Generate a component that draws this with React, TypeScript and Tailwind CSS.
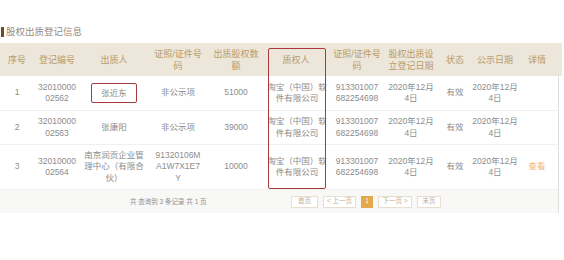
import React from 'react';

type Cell = string | string[];

interface Row {
  no: string;
  regNo: Cell;
  pledgor: Cell;
  pledgorId: Cell;
  amount: string;
  pledgee: Cell;
  pledgeeId: Cell;
  regDate: Cell;
  status: string;
  pubDate: Cell;
  detail: string;
}

const cols = 'grid grid-cols-[34px_46px_68px_60px_56px_64px_58px_50px_38px_42px_42px]';

const headers: string[][] = [
  ['序号'],
  ['登记编号'],
  ['出质人'],
  ['证照/证件号', '码'],
  ['出质股权数', '额'],
  ['质权人'],
  ['证照/证件号', '码'],
  ['股权出质设', '立登记日期'],
  ['状态'],
  ['公示日期'],
  ['详情'],
];

const pledgee = ['淘宝（中国）软', '件有限公司'];
const pledgeeId = ['913301007', '682254698'];
const date = ['2020年12月', '4日'];

const rows: Row[] = [
  {
    no: '1',
    regNo: ['32010000', '02562'],
    pledgor: '张近东',
    pledgorId: '非公示项',
    amount: '51000',
    pledgee,
    pledgeeId,
    regDate: date,
    status: '有效',
    pubDate: date,
    detail: '',
  },
  {
    no: '2',
    regNo: ['32010000', '02563'],
    pledgor: '张康阳',
    pledgorId: '非公示项',
    amount: '39000',
    pledgee,
    pledgeeId,
    regDate: date,
    status: '有效',
    pubDate: date,
    detail: '',
  },
  {
    no: '3',
    regNo: ['32010000', '02564'],
    pledgor: ['南京润贡企业管', '理中心（有限合', '伙）'],
    pledgorId: ['91320106M', 'A1W7X1E7', 'Y'],
    amount: '10000',
    pledgee,
    pledgeeId,
    regDate: date,
    status: '有效',
    pubDate: date,
    detail: '查看',
  },
];

const Lines: React.FC<{ value: Cell }> = ({ value }) => {
  const lines = Array.isArray(value) ? value : [value];
  return (
    <>
      {lines.map((l, i) => (
        <span key={i} className="block whitespace-nowrap">
          {l}
        </span>
      ))}
    </>
  );
};

const TableRow: React.FC<{ row: Row; height: string }> = ({ row, height }) => {
  const cell = 'flex flex-col items-center justify-center text-center';
  return (
    <div className={`${cols} ${height} border-b border-[#f0f0f0] text-[8.5px] leading-[11.5px] text-[#8c8c8c]`}>
      <div className={cell}>{row.no}</div>
      <div className={cell}><Lines value={row.regNo} /></div>
      <div className={cell}>
        {row.no === '1' ? (
          <span className="rounded-[2px] border-[1.5px] border-[#a8383a] px-[9px] py-[3px] leading-[12px]">
            {row.pledgor as string}
          </span>
        ) : (
          <Lines value={row.pledgor} />
        )}
      </div>
      <div className={cell}><Lines value={row.pledgorId} /></div>
      <div className={cell}>{row.amount}</div>
      <div className={`${cell} pl-[2px]`}><Lines value={row.pledgee} /></div>
      <div className={cell}><Lines value={row.pledgeeId} /></div>
      <div className={cell}><Lines value={row.regDate} /></div>
      <div className={cell}>{row.status}</div>
      <div className={cell}><Lines value={row.pubDate} /></div>
      <div className={`${cell} text-[#f2b878]`}>{row.detail}</div>
    </div>
  );
};

const PageButton: React.FC<{ label: string; width: string; active?: boolean }> = ({ label, width, active }) => (
  <div
    className={`flex h-[12px] items-center justify-center border text-[6.5px] leading-none ${width} ${
      active
        ? 'border-[#e2a84a] bg-[#e2a84a] text-white'
        : 'border-[#e8dfcf] bg-white text-[#c0b196]'
    }`}
  >
    {label}
  </div>
);

export default function App() {
  return (
    <div className="h-[260px] w-[564px] overflow-hidden bg-white font-['Liberation_Sans','Noto_Sans_CJK_SC',sans-serif]">
      <div className="flex h-[43px] items-end pb-[6px]">
        <div className="flex items-center">
          <div className="ml-[1px] h-[10px] w-[3px] bg-[#6e4a2e]" />
          <span className="ml-[2px] text-[9.5px] leading-none text-[#968a80]">股权出质登记信息</span>
        </div>
      </div>

      <div className="relative w-[562px]">
        <div className={`${cols} h-[33px] bg-[#ede6da] text-[9px] leading-[12px] text-[#b89c68]`}>
          {headers.map((h, i) => (
            <div key={i} className="flex flex-col items-center justify-center text-center">
              <Lines value={h} />
            </div>
          ))}
        </div>

        <div className="w-[559px] border-r border-[#dedede]">
          {rows.map((r, i) => (
            <TableRow key={r.no} row={r} height={i === 0 ? 'h-[35px]' : i === 1 ? 'h-[34px]' : 'h-[45px]'} />
          ))}
          <div className="flex h-[23px] items-center bg-[#f8f8f6]">
            <div className="w-[291px] pl-[130px] text-[6.5px] text-[#8f8f8f]">共 查询到 3 条记录 共 1 页</div>
            <div className="flex items-center gap-[5px]">
              <PageButton label="首页" width="w-[27px]" />
              <PageButton label="< 上一页" width="w-[33px]" />
              <PageButton label="1" width="w-[12px]" active />
              <PageButton label="下一页 >" width="w-[34px]" />
              <PageButton label="末页" width="w-[24px]" />
            </div>
          </div>
        </div>

        <div className="pointer-events-none absolute left-[268px] top-[5px] h-[141px] w-[58px] rounded-[2px] border-[1.5px] border-[#a8383a]" />
      </div>
    </div>
  );
}
